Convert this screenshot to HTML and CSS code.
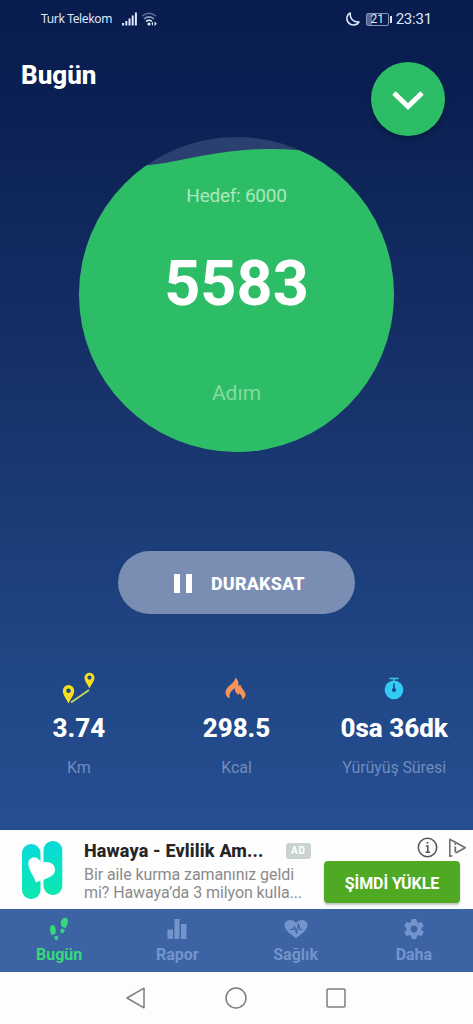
FILE: index.html
```html
<!DOCTYPE html>
<html lang="tr">
<head>
<meta charset="utf-8">
<title>Bugün</title>
<link rel="stylesheet" href="styles.css">
</head>
<body>
<div class="screen">
  <main class="today">
    <div class="status">
      <span class="carrier">Turk Telekom</span>
      <svg class="signal" width="15" height="14" viewBox="0 0 15 14" fill="#dfe8fb"><path d="M0 11h2v2.500H0zM3.300 9h2v4.500h-2zM6.500 6.500h2v7h-2zM9.700 3.500h2v10h-2zM12.900 0.500h2v13h-2z"/></svg>
      <svg class="wifi" width="17" height="14" viewBox="0 0 17 14" fill="none" stroke-width="1.500"><path d="M1 4.300Q8 -1.800 15 4.300" stroke="#5d6c94"/><path d="M3 7Q8 2.800 13 7" stroke="#8d9abb"/><path d="M5 9.500Q8 7 11 9.500" stroke="#e6eefc"/><circle cx="8" cy="12" r="1.600" fill="#e6eefc"/><path d="M12 9.500v4.500l-1.500-2.200zM13.500 9.500v4.500l2.300-2.200z" fill="#e6eefc"/></svg>
      <span class="spacer"></span>
      <svg class="moon" width="14" height="14" viewBox="0 0 14 14" fill="none" stroke="#dfe8fb" stroke-width="1.500" stroke-linejoin="round"><path d="M4.300 1C-.2 3.300-.2 9.500 4 12c3.200 1.900 7.200 1 9-2C7.300 10.400 3.600 6.500 4.300 1z"/></svg>
      <span class="battery"><span class="cell">21</span><span class="tip"></span></span>
      <span class="clock">23:31</span>
    </div>
    <header class="head">
      <h1>Bugün</h1>
      <button class="fab" aria-label="Aç"><svg width="32" height="20" viewBox="0 0 32 20" fill="none" stroke="#fff" stroke-width="5"><path d="M2 2L16 15.600 30 2"/></svg></button>
    </header>
    <section class="dial">
      <svg class="wave" width="315" height="315" viewBox="0 0 315 315"><defs><clipPath id="disc"><circle cx="157.500" cy="157.500" r="157.500"/></clipPath></defs><g clip-path="url(#disc)"><path fill="#2b406f" d="M0 0h315v315H0z"/><path fill="#2ebd67" d="M0 28C30 29 50 30 72 28C100 25 137 13 185 12C207 12 220 13 235 14L315 20V315H0z"/></g></svg>
      <div class="dial-text">
        <p class="goal">Hedef: 6000</p>
        <p class="count">5583</p>
        <p class="unit">Adım</p>
      </div>
    </section>
    <button class="pause"><svg width="18" height="19" viewBox="0 0 18 19" fill="#fff"><path d="M0 0h6v19H0zM12 0h6v19h-6z"/></svg><span>DURAKSAT</span></button>
    <section class="stats">
      <div class="stat">
        <svg width="34" height="34" viewBox="0 0 34 34"><path d="M9 31.500L27 19" stroke="#c6dc65" stroke-width="1.700"/><path fill="#f7e11e" fill-rule="evenodd" d="M6.500 32.500C4.500 28 .8 24 .8 19.800a5.700 5.700 0 0 1 11.400 0c0 4.200-3.700 8.200-5.700 12.700zM6.500 17.500a2.300 2.300 0 1 0 0 4.600 2.300 2.300 0 0 0 0-4.600zM27.500 17.500c-1.700-4-5-7.200-5-10.700a5 5 0 0 1 10 0c0 3.500-3.300 6.700-5 10.700zM27.500 4.500a2.100 2.100 0 1 0 0 4.200 2.100 2.100 0 0 0 0-4.200z"/></svg>
        <strong>3.74</strong><span>Km</span>
      </div>
      <div class="stat">
        <svg width="34" height="34" viewBox="0 0 34 34"><path fill="#f4945c" d="M10.800 27.500C5.500 25 5.500 19.500 9 16c3.500-3.500 7-5 7.300-9.500 3 2.500 3.700 5.500 2.900 8.700l2.300-1.700c0 3.500 5 6.500 5 10.200 0 2-1.300 3.500-3.500 4.500.6-2.700-.8-4.500-2.700-6l-.8 1.700c-2.700-1.700-3.800-3.900-3.500-6.700-4.300 2.800-6.200 5.800-5.200 10.300z"/></svg>
        <strong>298.5</strong><span>Kcal</span>
      </div>
      <div class="stat">
        <svg width="34" height="34" viewBox="0 0 34 34"><circle cx="17" cy="18.800" r="9.400" fill="#33caf4"/><path d="M12.500 7.500h9M17 7.500v3" stroke="#33caf4" stroke-width="1.400"/><circle cx="17" cy="19" r="2" fill="#174787"/><path d="M17 12.500v7" stroke="#174787" stroke-width="1.600"/></svg>
        <strong>0sa 36dk</strong><span>Yürüyüş Süresi</span>
      </div>
    </section>
  </main>
  <aside class="ad">
    <svg class="logo" width="42" height="60" viewBox="0 0 42 60"><defs><linearGradient id="mint" x2="0" y2="1"><stop stop-color="#08dad9"/><stop offset="1" stop-color="#0ce8af"/></linearGradient></defs><rect x="1" y="4" width="18.500" height="55" rx="9" fill="url(#mint)"/><rect x="22.500" y="1" width="18.800" height="54" rx="9" fill="url(#mint)"/><path fill="#fff" d="M15 42.500C12.500 35 7.500 30 7.300 23.500C7.200 16.500 17 14.500 20.500 23.500C26 20 34.300 23 34 30C33.700 37.500 24 38.500 15 42.500z"/></svg>
    <div class="ad-copy">
      <div class="ad-title"><b>Hawaya - Evlilik Am...</b><i>AD</i></div>
      <p>Bir aile kurma zamanınız geldi</p>
      <p>mi? Hawaya’da 3 milyon kulla...</p>
    </div>
    <div class="ad-side">
      <div class="ad-marks"><svg width="50" height="22" viewBox="0 0 50 22" fill="none" stroke="#55595c" stroke-width="1.600"><circle cx="10.500" cy="10.500" r="9.200"/><path d="M8.800 9h2v6.200M8.500 15.200h4.600"/><circle cx="10.500" cy="5.700" r="1" fill="#55595c" stroke="none"/><path d="M35.500 18.800L32.800 19.300V2.200L48.300 10.700L38.500 16" stroke="#6c7073" stroke-linejoin="round"/><path d="M38.300 9.500v5.500" stroke="#6c7073" stroke-width="1.800"/><circle cx="38.300" cy="7" r="1" fill="#6c7073" stroke="none"/></svg></div>
      <button class="cta">ŞİMDİ YÜKLE</button>
    </div>
  </aside>
  <nav class="tabs">
    <a class="tab active"><svg width="24" height="24" viewBox="0 0 24 24" fill="currentColor"><path d="M3 11.500C3 8.500 5.500 7 7.300 8.800c1.900 2 1.600 5.500 1 8.300l-3.600.8C3.500 15.500 3 13.800 3 11.500zM7.200 19.500l3.300-.7c1.300 1.500 1 4-.7 4.200-1.700.2-2.500-1.700-2.600-3.500zM13.800 5.500C14 2.500 16.500 0 18.800.8c2.400.9 2.500 4 1.700 6.300-.4 1.400-1.200 2.800-2 3.900l-3.800-1.300c-.6-1.300-1-2.700-.9-4.200zM14.500 11.500l3.300 1.200c-.2 2.200-1.700 4-3.400 3.400-1.700-.7-1.300-3.200.1-4.600z"/></svg>Bugün</a>
    <a class="tab"><svg width="24" height="24" viewBox="0 0 24 24" fill="currentColor"><path d="M2.500 12.500h5.500V22h-5.500zM9.500 2h5v20h-5zM16 7h5.500v15h-5.500z"/></svg>Rapor</a>
    <a class="tab"><svg width="24" height="24" viewBox="0 0 24 24"><path fill="currentColor" d="M12 21C7 17.500.5 13 .5 8.500.5 5.300 3 3 6 3c2.500 0 4.700 1.200 6 3.200C13.300 4.200 15.500 3 18 3c3 0 5.500 2.300 5.500 5.500C23.500 13 17 17.500 12 21z"/><path d="M6 12.500h3l1.500-2.500 2 5.500 2-8 1.500 5h2.500" fill="none" stroke="#3a62a3" stroke-width="1.200"/></svg>Sağlık</a>
    <a class="tab"><svg width="24" height="24" viewBox="0 0 24 24" fill="currentColor"><path d="M19.430 12.980c.04-.32.070-.64.070-.98s-.03-.66-.07-.98l2.110-1.650c.19-.15.240-.42.120-.64l-2-3.460c-.12-.22-.39-.3-.61-.22l-2.490 1c-.52-.4-1.080-.73-1.690-.98l-.38-2.650C14.460 2.180 14.250 2 14 2h-4c-.25 0-.46.180-.49.420l-.38 2.650c-.61.250-1.170.590-1.690.980l-2.490-1c-.23-.09-.49 0-.61.220l-2 3.460c-.13.220-.07.490.12.640l2.110 1.650c-.04.320-.07.650-.07.980s.03.660.07.980l-2.110 1.650c-.19.150-.24.420-.12.640l2 3.460c.12.220.39.300.61.220l2.490-1c.52.400 1.080.730 1.690.980l.38 2.650c.03.240.240.420.49.420h4c.25 0 .46-.18.49-.42l.38-2.650c.61-.25 1.170-.59 1.690-.98l2.490 1c.23.090.49 0 .61-.22l2-3.460c.12-.22.070-.49-.12-.64l-2.110-1.650zM12 15.500c-1.930 0-3.500-1.570-3.500-3.500s1.570-3.500 3.500-3.500 3.500 1.570 3.500 3.500-1.570 3.500-3.500 3.500z"/></svg>Daha</a>
  </nav>
  <div class="sysnav">
    <svg width="22" height="24" viewBox="0 0 22 24"><path d="M19 2.200v19.600L2 12z"/></svg>
    <svg width="22" height="24" viewBox="0 0 22 24"><circle cx="11" cy="12" r="10"/></svg>
    <svg width="22" height="24" viewBox="0 0 22 24"><rect x="2" y="3" width="18" height="18" rx="1"/></svg>
  </div>
</div>
</body>
</html>
```
FILE: styles.css
```css
* { box-sizing: border-box; }
body { margin: 0; font-family: Roboto, sans-serif; }
h1, p { margin: 0; }
button { border: 0; padding: 0; font-family: inherit; color: #fff; }
svg { display: block; flex: none; }
.screen { width: 473px; height: 1024px; display: flex; flex-direction: column; overflow: hidden; }
.today { height: 830px; display: flex; flex-direction: column; align-items: center; background: linear-gradient(#081c4e 0, #0b2052 100px, #18356d 430px, #1f4583 650px, #264f92 830px); }
.status { width: 100%; height: 38px; padding: 0 41px 0 41px; display: flex; align-items: center; color: #dfe8fb; }
.carrier { width: 81px; font: 12px/38px "Noto Sans", sans-serif; letter-spacing: -.35px; white-space: nowrap; }
.wifi { margin-left: 4px; }
.spacer { flex: 1; }
.battery { display: flex; align-items: center; margin: 0 4px 0 6px; }
.cell { width: 23px; height: 13px; border: 1px solid #8794b4; border-radius: 2px; background: linear-gradient(90deg, #56658d 22%, transparent 22%); font-size: 12px; line-height: 11px; text-align: center; }
.tip { width: 2px; height: 7px; margin-left: 1px; background: #dfe8fb; }
.clock { font-size: 15px; letter-spacing: -.2px; }
.head { width: 100%; height: 99px; padding: 22px 28px 0 21px; display: flex; justify-content: space-between; align-items: flex-start; color: #fff; }
.head h1 { font-size: 26px; line-height: 31px; font-weight: 800; }
.fab { width: 74px; height: 74px; margin-top: 2px; border-radius: 50%; background: #2ebd67; display: grid; place-items: center; padding-top: 4px; box-shadow: 0 3px 5px rgba(0, 0, 0, .25); }
.dial { width: 315px; height: 315px; display: grid; }
.wave, .dial-text { grid-area: 1 / 1; }
.dial-text { display: flex; flex-direction: column; align-items: center; padding-top: 47px; }
.goal { font-size: 19px; line-height: 24px; letter-spacing: -.25px; color: #abe8bd; }
.count { margin-top: 40px; font-size: 63px; line-height: 72px; font-weight: 700; color: #fff; }
.unit { margin-top: 60px; font-size: 21px; line-height: 26px; color: #83dba0; }
.pause { width: 237px; height: 63px; margin-top: 99px; padding: 1px 0 0 56px; border-radius: 32px; background: #7a8eb4; display: flex; align-items: center; gap: 19px; font-size: 18px; font-weight: 800; letter-spacing: .15px; }
.stats { width: 100%; margin-top: 57px; display: grid; grid-template-columns: repeat(3, 157.67px); }
.stat { display: flex; flex-direction: column; align-items: center; white-space: nowrap; }
.stat strong { margin-top: 7px; color: #fff; font-size: 26px; line-height: 32px; font-weight: 800; }
.stat span { margin-top: 14px; color: #718bbd; font-size: 16px; line-height: 20px; letter-spacing: -.1px; }
.ad { height: 79px; background: #fefefe; display: flex; padding-left: 21px; }
.logo { margin-top: 10px; }
.ad-copy { width: 240px; margin-left: 21px; padding-top: 9px; color: #8b8b8b; font-size: 16px; line-height: 18px; letter-spacing: -.08px; white-space: nowrap; }
.ad-copy p { position: relative; top: 1px; }
.ad-title { display: flex; align-items: center; justify-content: space-between; width: 227px; height: 24px; margin-bottom: 2px; color: #252525; }
.ad-title b { font-size: 18px; font-weight: 800; letter-spacing: .15px; }
.ad-title i { width: 25px; height: 16px; border-radius: 3px; background: #c9d3d0; color: #fff; font: 700 10px/16px Roboto, sans-serif; text-align: center; letter-spacing: 1px; }
.ad-side { flex: 1; padding-top: 7px; }
.ad-marks { padding-left: 93px; height: 24px; }
.cta { width: 136px; height: 42px; border-radius: 4px; background: #50a922; box-shadow: 0 2px 2px #c3c8c1; padding-top: 2px; font-size: 16px; font-weight: 700; letter-spacing: -.05px; }
.tabs { height: 63px; background: #3c64a4; display: grid; grid-template-columns: repeat(4, 1fr); }
.tab { display: flex; flex-direction: column; align-items: center; padding-top: 8px; gap: 4px; font-size: 16px; line-height: 20px; font-weight: 700; color: #7394cc; }
.active { color: #35d979; }
.sysnav { height: 52px; padding-right: 1px; background: #fdfdfd; display: flex; justify-content: center; align-items: center; gap: 78px; fill: none; stroke: #7d7d7d; stroke-width: 1.500; stroke-linejoin: round; }
```
